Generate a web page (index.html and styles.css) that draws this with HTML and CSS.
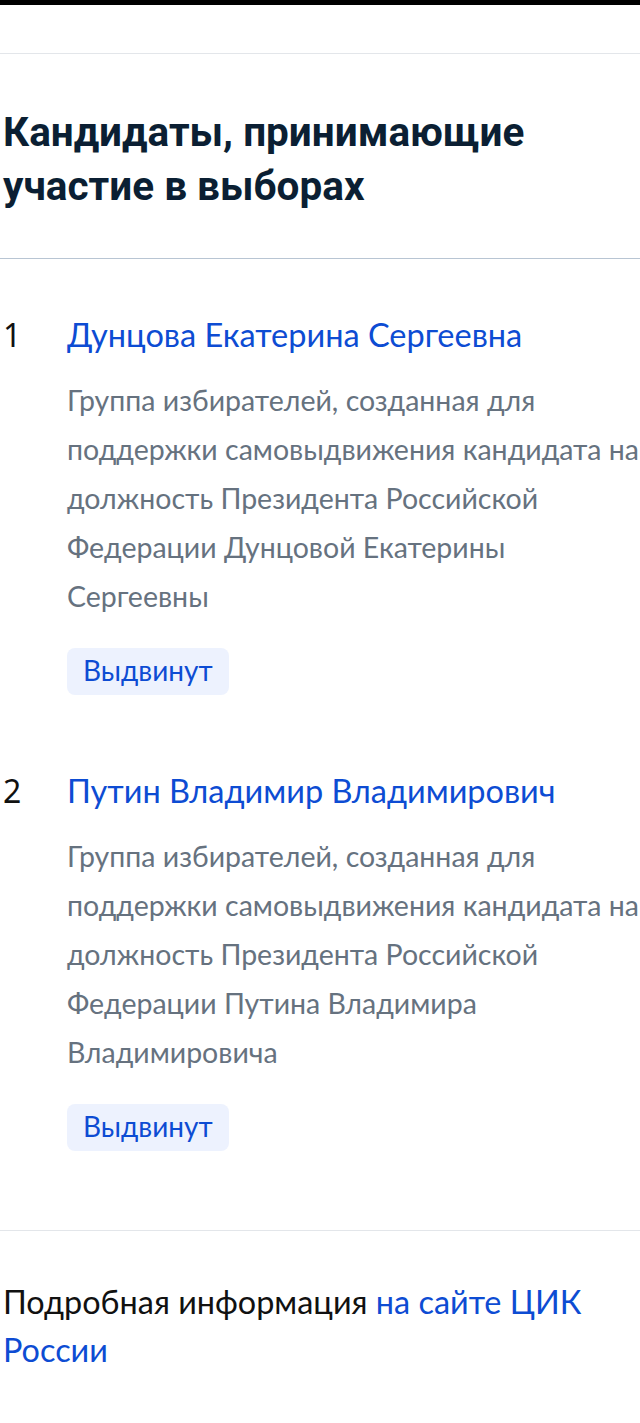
FILE: index.html
```html
<!DOCTYPE html>
<html lang="ru">
<head>
<meta charset="utf-8">
<title>Кандидаты, принимающие участие в выборах</title>
<link rel="stylesheet" href="styles.css">
</head>
<body>
<div class="topbar"></div>
<div class="head-spacer"></div>

<section class="election">
  <h2 class="election__title">Кандидаты, принимающие участие в выборах</h2>

  <ol class="candidates">
    <li class="candidate">
      <span class="candidate__num">1</span>
      <div class="candidate__body">
        <a class="candidate__name" href="#">Дунцова Екатерина Сергеевна</a>
        <p class="candidate__desc">Группа избирателей, созданная для поддержки самовыдвижения кандидата на должность Президента Российской Федерации Дунцовой Екатерины Сергеевны</p>
        <span class="candidate__status">Выдвинут</span>
      </div>
    </li>
    <li class="candidate">
      <span class="candidate__num">2</span>
      <div class="candidate__body">
        <a class="candidate__name" href="#">Путин Владимир Владимирович</a>
        <p class="candidate__desc">Группа избирателей, созданная для поддержки самовыдвижения кандидата на должность Президента Российской Федерации Путина Владимира Владимировича</p>
        <span class="candidate__status">Выдвинут</span>
      </div>
    </li>
  </ol>

  <p class="election__more">Подробная информация <a href="#">на сайте ЦИК России</a></p>
</section>
</body>
</html>
```

FILE: styles.css
```css
html, body {
  margin: 0;
  padding: 0;
  background: #ffffff;
  overflow-x: hidden;
}

body {
  font-family: Lato, "Noto Sans", sans-serif;
  color: #0b1f33;
}

a {
  text-decoration: none;
}

.topbar {
  height: 5px;
  background: #000000;
}

.head-spacer {
  height: 48px;
  border-bottom: 1px solid #e3e6ea;
}

.election__title {
  margin: 51px 0 0;
  padding: 0 0 45px 3px;
  font-family: Roboto, "Liberation Sans", sans-serif;
  font-weight: 700;
  font-size: 40.5px;
  line-height: 54px;
  color: #0b1f33;
  border-bottom: 1px solid #b8c5d3;
}

.candidates {
  list-style: none;
  margin: 0;
  padding: 56px 0 79px 3px;
  display: flex;
  flex-direction: column;
  gap: 76px;
  border-bottom: 1px solid #e3e6ea;
}

.candidate {
  display: flex;
}

.candidate__num {
  flex: 0 0 64px;
  font-family: "Noto Sans", sans-serif;
  font-size: 32px;
  line-height: 40px;
  color: #111111;
}

.candidate__body {
  flex: 1;
  display: flex;
  flex-direction: column;
  align-items: flex-start;
}

.candidate__name {
  font-size: 32.5px;
  line-height: 40px;
  color: #0d4cd3;
}

.candidate__desc {
  margin: 21px 0 27px;
  font-size: 28.5px;
  line-height: 49px;
  color: #66727f;
}

.candidate__status {
  padding: 7px 16px 9px;
  font-size: 28px;
  line-height: 31px;
  color: #0d4cd3;
  background: #edf2fe;
  border-radius: 8px;
}

.election__more {
  margin: 0;
  padding: 47px 0 40px 3px;
  font-size: 32.4px;
  line-height: 48px;
  color: #111111;
}

.election__more a {
  color: #0d4cd3;
}
```
